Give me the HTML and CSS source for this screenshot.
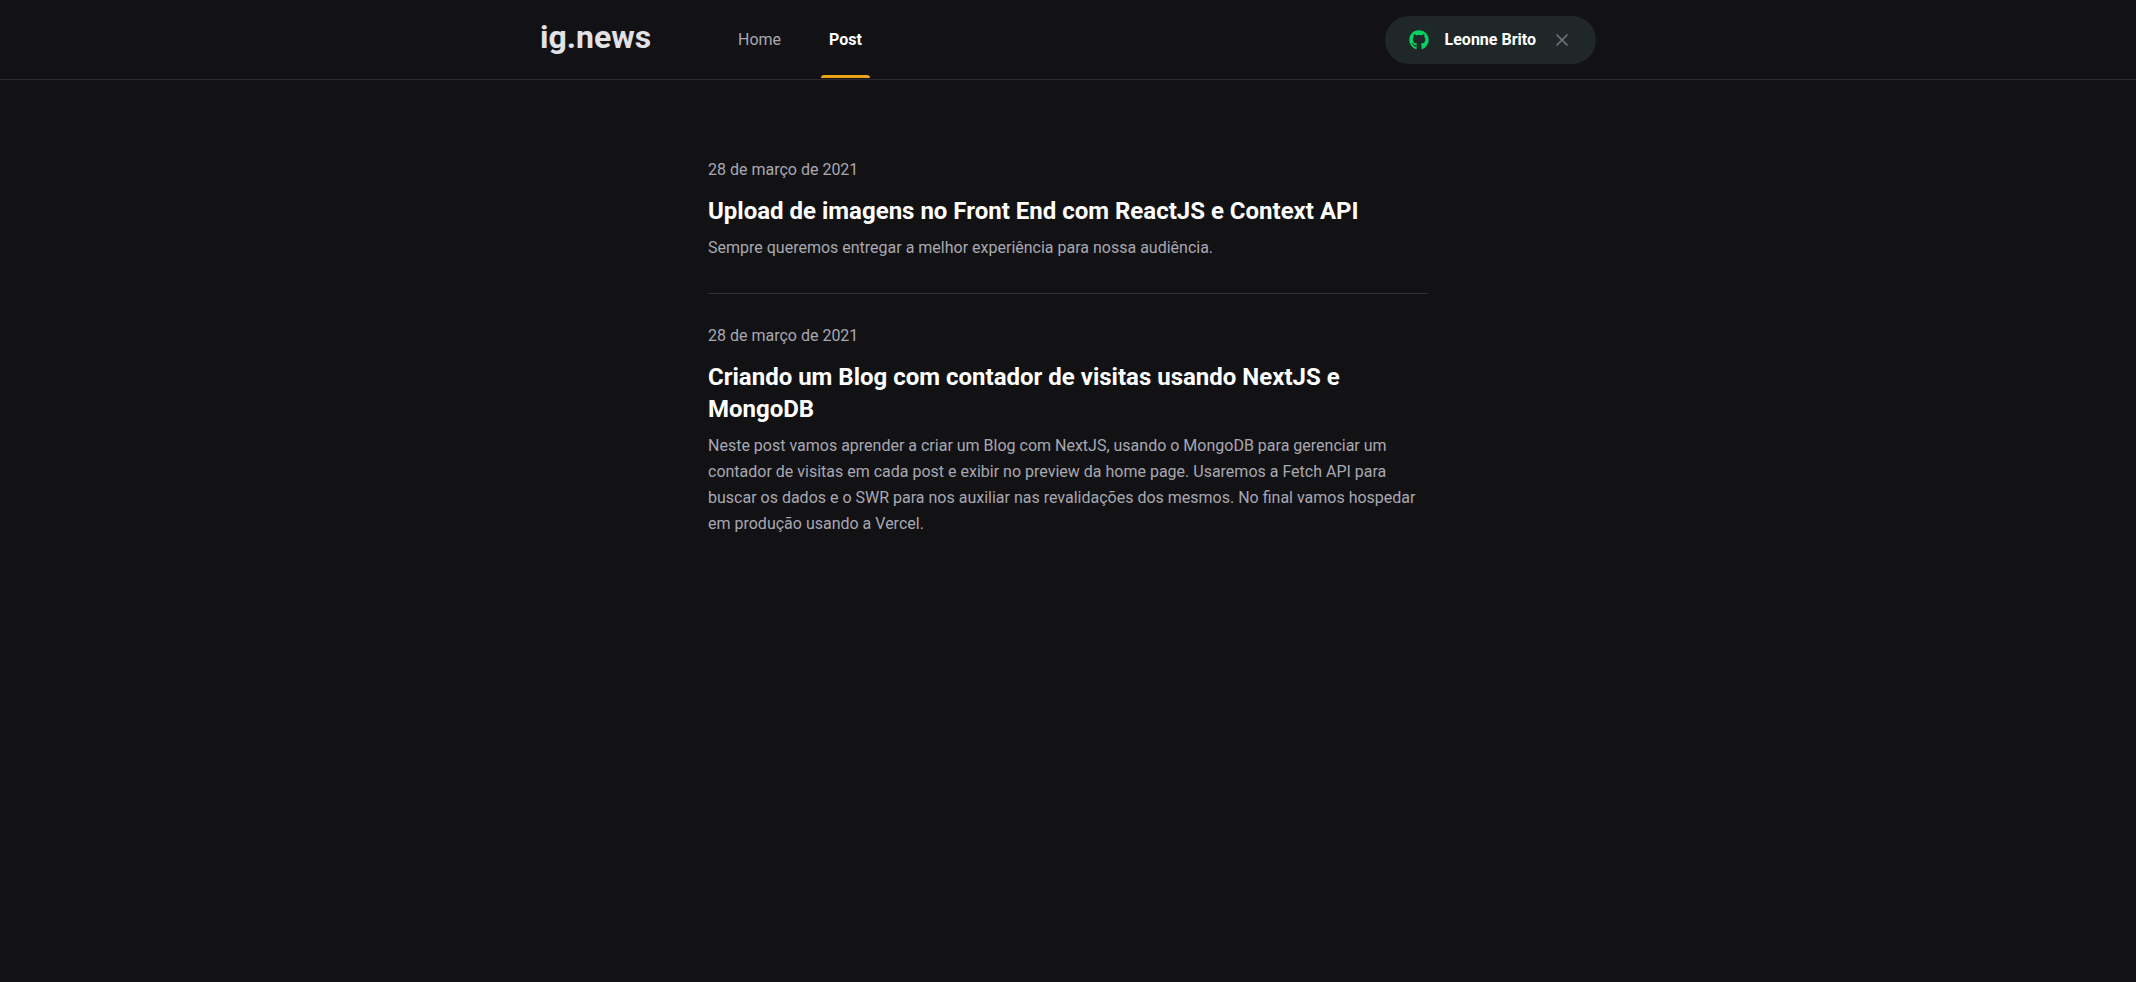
FILE: index.html
```html
<!DOCTYPE html>
<html lang="pt-BR">
<head>
  <meta charset="utf-8">
  <meta name="viewport" content="width=device-width, initial-scale=1">
  <title>Posts | ig.news</title>
  <link rel="stylesheet" href="styles.css">
</head>
<body>
  <header class="header">
    <div class="header-content">
      <a class="logo" href="#">ig.news</a>
      <nav class="nav">
        <a class="nav-link" href="#">Home</a>
        <a class="nav-link active" href="#" aria-current="page">Post</a>
      </nav>
      <button class="account" type="button">
        <svg class="github-icon" viewBox="0 0 496 512" aria-hidden="true"><path fill="currentColor" d="M165.900 397.400c0 2-2.300 3.600-5.200 3.600-3.300.3-5.600-1.300-5.600-3.600 0-2 2.300-3.600 5.200-3.600 3-.3 5.600 1.300 5.600 3.600zm-31.100-4.500c-.7 2 1.300 4.300 4.300 4.900 2.600 1 5.600 0 6.200-2s-1.300-4.300-4.300-5.200c-2.600-.7-5.500.3-6.200 2.300zm44.200-1.700c-2.900.7-4.900 2.600-4.600 4.900.3 2 2.900 3.300 5.900 2.600 2.900-.7 4.900-2.600 4.600-4.600-.3-1.900-3-3.200-5.900-2.900zM244.800 8C106.100 8 0 113.300 0 252c0 110.900 69.800 205.800 169.500 239.200 12.800 2.300 17.300-5.600 17.300-12.100 0-6.200-.3-40.400-.3-61.400 0 0-70 15-84.700-29.800 0 0-11.400-29.100-27.800-36.600 0 0-22.900-15.700 1.600-15.400 0 0 24.900 2 38.600 25.800 21.900 38.600 58.600 27.500 72.900 20.900 2.300-16 8.800-27.100 16-33.700-55.900-6.200-112.300-14.300-112.300-110.500 0-27.500 7.600-41.300 23.600-58.900-2.600-6.500-11.100-33.300 2.600-67.900 20.900-6.500 69 27 69 27 20-5.600 41.500-8.500 62.800-8.500s42.800 2.900 62.800 8.500c0 0 48.100-33.600 69-27 13.700 34.700 5.200 61.400 2.600 67.900 16 17.700 25.800 31.500 25.800 58.900 0 96.500-58.900 104.200-114.800 110.500 9.200 7.900 17 22.900 17 46.400 0 33.700-.3 75.400-.3 83.600 0 6.500 4.600 14.400 17.300 12.100C428.200 457.800 496 362.900 496 252 496 113.300 383.500 8 244.800 8zM97.200 352.900c-1.300 1-1 3.300.7 5.200 1.600 1.600 3.900 2.300 5.200 1 1.300-1 1-3.300-.7-5.200-1.600-1.600-3.900-2.300-5.200-1zm-10.800-8.100c-.7 1.300.3 2.900 2.300 3.900 1.600 1 3.600.7 4.300-.7.7-1.300-.3-2.900-2.300-3.900-2-.6-3.600-.3-4.300.7zm32.400 35.600c-1.600 1.300-1 4.300 1.300 6.200 2.300 2.300 5.200 2.600 6.500 1 1.300-1.300.7-4.300-1.300-6.200-2.200-2.300-5.200-2.600-6.500-1zm-11.400-14.700c-1.600 1-1.600 3.600 0 5.900 1.600 2.300 4.300 3.300 5.600 2.300 1.600-1.300 1.600-3.900 0-6.200-1.400-2.300-4-3.300-5.600-2z"/></svg>
        <span class="account-name">Leonne Brito</span>
        <svg class="close-icon" viewBox="0 0 24 24" aria-hidden="true"><path d="M18 6 6 18M6 6l12 12"/></svg>
      </button>
    </div>
  </header>

  <main class="container">
    <div class="posts">
      <a class="post" href="#">
        <time datetime="2021-03-28">28 de março de 2021</time>
        <h2>Upload de imagens no Front End com ReactJS e Context API</h2>
        <p>Sempre queremos entregar a melhor experiência para nossa audiência.</p>
      </a>
      <a class="post" href="#">
        <time datetime="2021-03-28">28 de março de 2021</time>
        <h2>Criando um Blog com contador de visitas usando NextJS e MongoDB</h2>
        <p>Neste post vamos aprender a criar um Blog com NextJS, usando o MongoDB para gerenciar um contador de visitas em cada post e exibir no preview da home page. Usaremos a Fetch API para buscar os dados e o SWR para nos auxiliar nas revalidações dos mesmos. No final vamos hospedar em produção usando a Vercel.</p>
      </a>
    </div>
  </main>
</body>
</html>
```

FILE: styles.css
```css
* {
  margin: 0;
  padding: 0;
  box-sizing: border-box;
}

body {
  background: #121214;
  color: #ffffff;
}

body,
button {
  font: 400 16px Roboto, sans-serif;
}

a {
  color: inherit;
  text-decoration: none;
}

.header {
  height: 80px;
  border-bottom: 1px solid #29292e;
}

.header-content {
  max-width: 1120px;
  height: 80px;
  margin: 0 auto;
  padding: 0 32px;
  display: flex;
  align-items: center;
}

.logo {
  width: 110px;
  padding-bottom: 6px;
  color: #e1e1e6;
  font-size: 32px;
  font-weight: 700;
  line-height: 36px;
}

.nav {
  display: flex;
  gap: 32px;
  margin-left: 80px;
}

.nav-link {
  position: relative;
  padding: 0 8px;
  line-height: 80px;
  color: #a8a8b3;
}

.nav-link.active {
  color: #ffffff;
  font-weight: 700;
}

.nav-link.active::after {
  content: "";
  position: absolute;
  left: 0;
  bottom: 2px;
  width: 100%;
  height: 3px;
  border-radius: 3px 3px 0 0;
  background: #eba417;
}

.account {
  display: flex;
  align-items: center;
  gap: 16px;
  height: 48px;
  margin-left: auto;
  padding: 0 24px;
  border: 0;
  border-radius: 24px;
  background: #1f2729;
  color: #ffffff;
  font-weight: 700;
  cursor: pointer;
}

.account-name {
  line-height: 18px;
}

.github-icon {
  width: 20px;
  height: 20px;
  color: #04d361;
}

.close-icon {
  width: 20px;
  height: 20px;
  fill: none;
  stroke: #737380;
  stroke-width: 2;
  stroke-linecap: round;
}

.container {
  max-width: 1120px;
  margin: 0 auto;
  padding: 0 32px;
}

.posts {
  max-width: 720px;
  margin: 80px auto 0;
}

.post {
  display: block;
}

.post + .post {
  margin-top: 32px;
  padding-top: 32px;
  border-top: 1px solid #323238;
}

.post time {
  display: block;
  color: #a8a8b3;
}

.post h2 {
  margin-top: 16px;
  font-size: 24px;
  line-height: 32px;
}

.post p {
  margin-top: 8px;
  color: #a8a8b3;
  line-height: 26px;
}
```
